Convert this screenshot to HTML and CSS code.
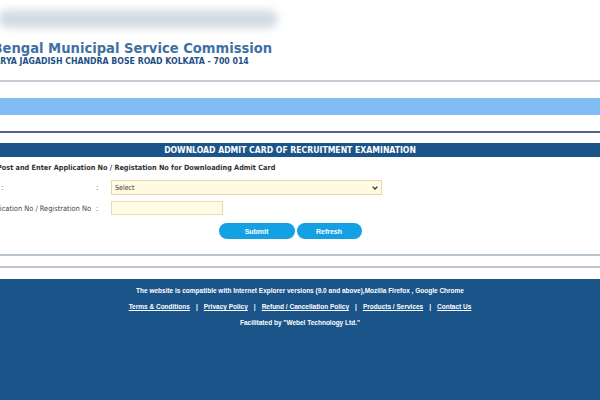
FILE: index.html
```html
<!DOCTYPE html>
<html lang="en">
<head>
<meta charset="utf-8">
<title>West Bengal Municipal Service Commission - Download Admit Card</title>
<link rel="stylesheet" href="styles.css">
</head>
<body>
<div class="page">
  <div class="blur"></div>
  <header class="brand">
    <h1 class="title">West Bengal Municipal Service Commission</h1>
    <p class="address">ACHARYA JAGADISH CHANDRA BOSE ROAD KOLKATA - 700 014</p>
  </header>
  <div class="rule rule-top"></div>
  <div class="band"></div>
  <div class="rule rule-dark"></div>
  <main class="panel">
    <h2 class="panel-head">DOWNLOAD ADMIT CARD OF RECRUITMENT EXAMINATION</h2>
    <p class="hint">Select Post and Enter Application No / Registation No for Downloading Admit Card</p>
    <div class="form">
      <span class="lbl">Post :</span><span class="colon">:</span>
      <div class="sel-wrap">
        <select class="sel"><option>Select</option></select>
        <svg class="chev" width="6" height="4" viewBox="0 0 6 4" aria-hidden="true"><path d="M0.6 0.6 L3 3 L5.4 0.6" fill="none" stroke="#333" stroke-width="1.3"/></svg>
      </div>
      <span class="lbl">Application No / Registration No</span><span class="colon">:</span>
      <input class="inp" type="text">
    </div>
    <div class="actions">
      <button class="btn btn-submit" type="button">Submit</button>
      <button class="btn btn-refresh" type="button">Refresh</button>
    </div>
  </main>
  <div class="rule rule-light r1"></div>
  <div class="rule rule-light r2"></div>
  <footer class="foot">
    <p>The website is compatible with Internet Explorer versions (9.0 and above),Mozilla Firefox , Google Chrome</p>
    <p class="links"><a href="#">Terms &amp; Conditions</a><span class="sep">|</span><a href="#">Privacy Policy</a><span class="sep">|</span><a href="#">Refund / Cancellation Policy</a><span class="sep">|</span><a href="#">Products / Services</a><span class="sep">|</span><a href="#">Contact Us</a></p>
    <p>Facilitated by "Webel Technology Ltd."</p>
  </footer>
</div>
</body>
</html>
```
FILE: styles.css
```css
html, body {
  margin: 0;
  padding: 0;
  width: 600px;
  height: 400px;
  overflow: hidden;
  background: #ffffff;
}
.page {
  width: 660px;
  height: 400px;
  margin-left: -40px;
  padding-top: 10px;
  box-sizing: border-box;
  display: flex;
  flex-direction: column;
  font-family: "DejaVu Sans Condensed", "DejaVu Sans", sans-serif;
}
.blur {
  margin-left: 38px;
  width: 280px;
  height: 18px;
  background: #d3dae2;
  border-radius: 9px;
  filter: blur(4px);
}
.brand {
  margin-top: 11px;
  display: flex;
  flex-direction: column;
}
.title {
  margin: 0 0 0 -9px;
  font-size: 14.6px;
  line-height: 17px;
  font-weight: bold;
  color: #3f70a3;
}
.address {
  margin: 1px 0 0 16px;
  font-size: 8.7px;
  line-height: 9px;
  font-weight: bold;
  color: #1f4f86;
}
.rule { width: 100%; flex: none; }
.rule-top {
  margin-top: 14px;
  height: 2px;
  background: #c5cdd6;
}
.band {
  margin-top: 16px;
  height: 17px;
  flex: none;
  background: #80bcf3;
}
.rule-dark {
  margin-top: 16px;
  height: 2px;
  background: #4d6684;
}
.panel {
  margin-top: 10px;
  display: flex;
  flex-direction: column;
}
.panel-head {
  margin: 0;
  height: 14px;
  line-height: 14px;
  background: #1b5488;
  color: #ffffff;
  font-size: 8.6px;
  font-weight: bold;
  text-align: center;
}
.hint {
  margin: 6px 0 0 12px;
  font-size: 7.25px;
  line-height: 10px;
  font-weight: bold;
  color: #333333;
}
.form {
  margin: 7px 0 0 25px;
  display: grid;
  grid-template-columns: 110px 16px auto;
  row-gap: 6px;
  align-items: center;
  font-size: 7.4px;
  color: #444444;
}
.colon { padding-left: 1px; }
.sel-wrap {
  position: relative;
  width: 271px;
  height: 15px;
}
.sel {
  width: 271px;
  height: 15px;
  margin: 0;
  padding: 0 3px;
  appearance: none;
  -webkit-appearance: none;
  font-family: "DejaVu Sans Condensed", "DejaVu Sans", sans-serif;
  font-size: 7px;
  color: #333333;
  background: #fffbe2;
  border: 1px solid #e2d8ab;
  border-radius: 0;
}
.chev {
  position: absolute;
  right: 4px;
  top: 6px;
}
.inp {
  width: 112px;
  height: 14px;
  box-sizing: border-box;
  margin: 0;
  padding: 0 2px;
  background: #fffbe2;
  border: 1px solid #e6dcb3;
}
.actions {
  margin-top: 8px;
  display: flex;
  justify-content: center;
  gap: 2px;
}
.btn {
  height: 16px;
  padding: 0;
  border: none;
  border-radius: 8px;
  background: #14a1e3;
  color: #ffffff;
  font-family: "Liberation Sans", Arial, sans-serif;
  font-size: 7px;
  font-weight: bold;
}
.btn-submit { width: 76px; }
.btn-refresh { width: 65px; }
.rule-light {
  height: 2px;
  background: #bac4ce;
}
.r1 { margin-top: 15px; }
.r2 { margin-top: 10px; }
.foot {
  margin-top: 11px;
  flex: 1;
  padding: 4px 0 0 20px;
  background: #1b5488;
  color: #ffffff;
  font-family: "Liberation Sans", Arial, sans-serif;
  font-size: 6.5px;
  font-weight: bold;
  text-align: center;
}
.foot p {
  margin: 0;
  line-height: 16px;
}
.foot a {
  color: #ffffff;
  text-decoration: underline;
}
.sep { padding: 0 6px; }
```
